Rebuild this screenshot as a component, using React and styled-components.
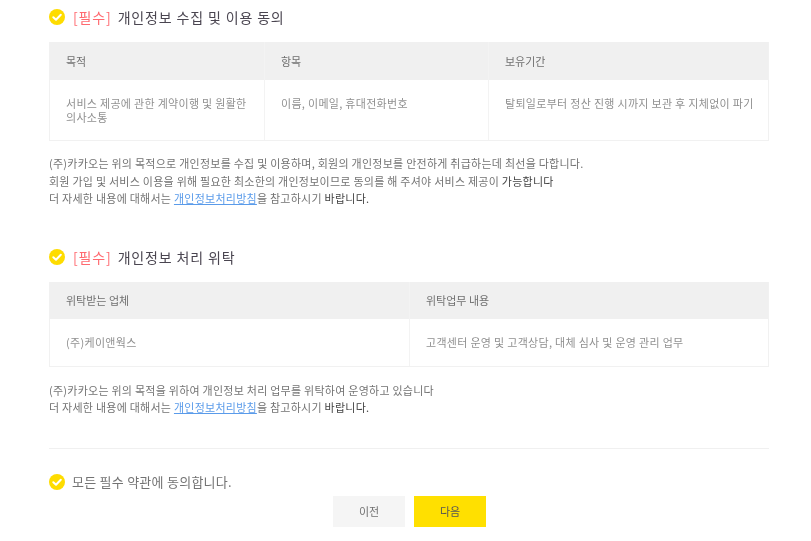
import React from "react";
import styled, { createGlobalStyle } from "styled-components";

const Global = createGlobalStyle`
  html, body { margin: 0; padding: 0; background: #fff; }
  body { font-family: "Noto Sans CJK KR", "Noto Sans", sans-serif; }
`;

const Page = styled.main`
  width: 720px;
  height: 541px;
  overflow: hidden;
  margin-left: 49px;
  padding-top: 9px;
  box-sizing: border-box;
  display: flex;
  flex-direction: column;
  filter: blur(0.4px);
`;

const Heading = styled.h2`
  display: flex;
  align-items: center;
  gap: 8px;
  height: 16px;
  margin: 0;
  font-size: 14px;
  line-height: 16px;
  font-weight: 400;
  color: #4a4550;
  letter-spacing: 0.85px;
`;

const Required = styled.span`
  color: #ff6a70;
  margin-right: 6px;
`;

const CheckBadge = styled.svg`
  width: 16px;
  height: 16px;
  flex: none;
`;

const Check = () => (
  <CheckBadge viewBox="0 0 16 16" aria-hidden="true">
    <circle cx="8" cy="8" r="8" fill="#fedc00" />
    <path d="M4.3 8.2 7 10.7 11.8 5.7" fill="none" stroke="#fff" strokeWidth="2" strokeLinecap="round" strokeLinejoin="round" />
  </CheckBadge>
);

const Table = styled.div`
  display: grid;
  grid-template-columns: ${(p) => p.$cols};
  grid-template-rows: ${(p) => p.$rows};
  margin-top: ${(p) => p.$top}px;
  border: 1px solid #f1f1f1;
  border-width: 0 1px 1px 1px;
  font-size: 11px;
  line-height: 14px;
`;

const HeadCell = styled.div`
  display: flex;
  align-items: center;
  padding-left: 16px;
  background: #f0f0f0;
  color: #707070;
  & + & { border-left: 1px solid #f3f3f3; }
`;

const BodyCell = styled.div`
  padding: 16px 8px 0 16px;
  color: #909090;
  letter-spacing: 0.3px;
  & + & { border-left: 1px solid #f3f3f3; }
`;

const Notes = styled.div`
  margin-top: ${(p) => p.$top}px;
  font-size: 11px;
  line-height: 17.5px;
  color: #737373;
  letter-spacing: 0.25px;
`;

const Strong = styled.span`
  color: #444;
`;

const PolicyLink = styled.a`
  color: #5a9bea;
  text-decoration: underline;
`;

const Divider = styled.hr`
  width: 100%;
  margin: 31px 0 0;
  border: 0;
  border-top: 1px solid #f0f0f0;
`;

const AgreeRow = styled.div`
  display: flex;
  align-items: center;
  gap: 7px;
  height: 16px;
  margin-top: 25px;
  font-size: 13px;
  color: #737373;
  letter-spacing: 0.25px;
`;

const Actions = styled.div`
  display: flex;
  justify-content: center;
  gap: 9px;
  margin-top: 6px;
  padding-left: 1px;
`;

const Button = styled.button`
  width: 72px;
  height: 31px;
  border: 0;
  padding: 0;
  font: inherit;
  font-size: 11px;
  color: ${(p) => (p.$primary ? "#555" : "#707070")};
  background: ${(p) => (p.$primary ? "#ffe000" : "#f5f5f5")};
`;

const Spacer = styled.div`
  height: ${(p) => p.$h}px;
  flex: none;
`;

const Policy = () => (
  <>
    더 자세한 내용에 대해서는 <PolicyLink href="#">개인정보처리방침</PolicyLink>을 참고하시기 <Strong>바랍니다.</Strong>
  </>
);

export default function App() {
  return (
    <>
      <Global />
      <Page>
        <Heading>
          <Check />
          <span><Required>[필수]</Required>개인정보 수집 및 이용 동의</span>
        </Heading>
        <Table $top={17} $cols="214px 224px 1fr" $rows="38px 60px">
          <HeadCell>목적</HeadCell>
          <HeadCell>항목</HeadCell>
          <HeadCell>보유기간</HeadCell>
          <BodyCell>서비스 제공에 관한 계약이행 및 원활한 의사소통</BodyCell>
          <BodyCell>이름, 이메일, 휴대전화번호</BodyCell>
          <BodyCell>탈퇴일로부터 정산 진행 시까지 보관 후 지체없이 파기</BodyCell>
        </Table>
        <Notes $top={14}>
          (주)카카오는 위의 목적으로 개인정보를 수집 및 이용하며, 회원의 개인정보를 안전하게 취급하는데 최선을 다합니다.<br />
          회원 가입 및 서비스 이용을 위해 필요한 최소한의 개인정보이므로 동의를 해 주셔야 서비스 제공이 <Strong>가능합니다</Strong><br />
          <Policy />
        </Notes>
        <Spacer $h={41} />
        <Heading>
          <Check />
          <span><Required>[필수]</Required>개인정보 처리 위탁</span>
        </Heading>
        <Table $top={17} $cols="359px 1fr" $rows="37px 47px">
          <HeadCell>위탁받는 업체</HeadCell>
          <HeadCell>위탁업무 내용</HeadCell>
          <BodyCell>(주)케이앤웍스</BodyCell>
          <BodyCell>고객센터 운영 및 고객상담, 대체 심사 및 운영 관리 업무</BodyCell>
        </Table>
        <Notes $top={15}>
          (주)카카오는 위의 목적을 위하여 개인정보 처리 업무를 위탁하여 운영하고 있습니다<br />
          <Policy />
        </Notes>
        <Divider />
        <AgreeRow>
          <Check />
          모든 필수 약관에 동의합니다.
        </AgreeRow>
        <Actions>
          <Button>이전</Button>
          <Button $primary>다음</Button>
        </Actions>
      </Page>
    </>
  );
}
